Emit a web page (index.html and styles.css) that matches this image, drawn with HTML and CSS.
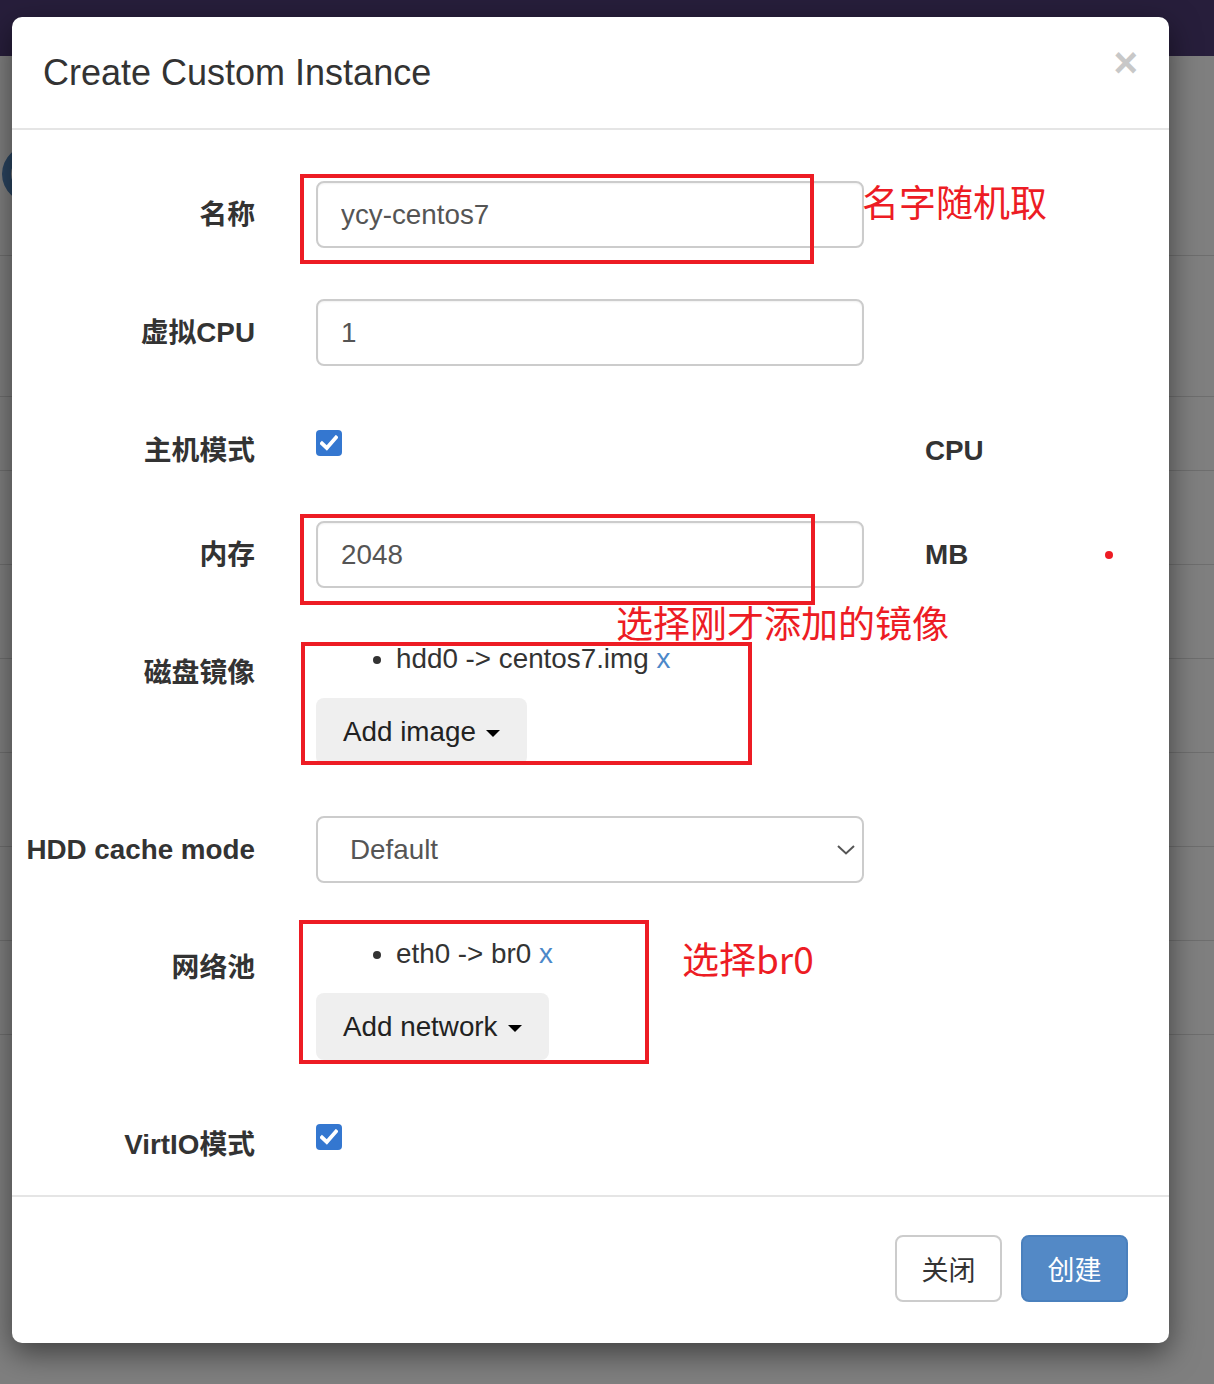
FILE: index.html
```html
<!DOCTYPE html>
<html lang="zh-CN">
<head>
    <meta charset="UTF-8">
    <meta name="viewport" content="width=device-width, initial-scale=1.0">
    <title>Create Custom Instance</title>
    <link rel="stylesheet" href="styles.css">
</head>
<body>
    <!-- page behind the modal -->
    <div class="page">
        <nav class="navbar"></nav>
        <div class="page-content">
            <div class="page-logo"></div>
            <div class="table">
                <div class="table-row table-row-head"></div>
                <div class="table-row table-row-short"></div>
                <div class="table-row"></div>
                <div class="table-row"></div>
                <div class="table-row"></div>
                <div class="table-row"></div>
                <div class="table-row"></div>
                <div class="table-row"></div>
            </div>
        </div>
    </div>

    <div class="modal-backdrop"></div>

    <div class="modal">
        <div class="modal-header">
            <h4 class="modal-title">Create Custom Instance</h4>
            <span class="close">&times;</span>
        </div>

        <div class="modal-body">
            <div class="form-row">
                <label class="control-label">名称</label>
                <input class="form-control" type="text" value="ycy-centos7">
            </div>

            <div class="form-row">
                <label class="control-label">虚拟CPU</label>
                <input class="form-control" type="text" value="1">
            </div>

            <div class="form-row">
                <label class="control-label">主机模式</label>
                <div class="check-cell">
                    <span class="checkbox">
                        <svg width="18" height="16" viewBox="0 0 18 16"><path d="M2 8.5 L6.8 13 L16 2.5" fill="none" stroke="#fff" stroke-width="3.8" stroke-linecap="square"/></svg>
                    </span>
                </div>
                <label class="control-label unit-label">CPU</label>
            </div>

            <div class="form-row">
                <label class="control-label">内存</label>
                <input class="form-control" type="text" value="2048">
                <label class="control-label unit-label">MB</label>
            </div>

            <div class="form-row">
                <label class="control-label">磁盘镜像</label>
                <div class="list-cell">
                    <ul class="item-list">
                        <li>hdd0 -&gt; centos7.img <a href="#" class="remove">x</a></li>
                    </ul>
                    <button class="dropdown-btn">Add image<span class="caret"></span></button>
                </div>
            </div>

            <div class="form-row">
                <label class="control-label">HDD cache mode</label>
                <div class="select-box">
                    <span>Default</span>
                    <svg width="18" height="10" viewBox="0 0 18 10"><path d="M1 1 L9 8.5 L17 1" fill="none" stroke="#555" stroke-width="2"/></svg>
                </div>
            </div>

            <div class="form-row">
                <label class="control-label">网络池</label>
                <div class="list-cell">
                    <ul class="item-list">
                        <li>eth0 -&gt; br0 <a href="#" class="remove">x</a></li>
                    </ul>
                    <button class="dropdown-btn">Add network<span class="caret"></span></button>
                </div>
            </div>

            <div class="form-row">
                <label class="control-label">VirtIO模式</label>
                <div class="check-cell">
                    <span class="checkbox">
                        <svg width="18" height="16" viewBox="0 0 18 16"><path d="M2 8.5 L6.8 13 L16 2.5" fill="none" stroke="#fff" stroke-width="3.8" stroke-linecap="square"/></svg>
                    </span>
                </div>
            </div>
        </div>

        <div class="modal-footer">
            <button class="btn btn-default">关闭</button>
            <button class="btn btn-primary">创建</button>
        </div>
    </div>

    <!-- red notes drawn on top of the screenshot -->
    <div class="note-box note-box-name"></div>
    <div class="note-box note-box-mem"></div>
    <div class="note-box note-box-image"></div>
    <div class="note-box note-box-net"></div>
    <div class="note-text note-text-name">名字随机取</div>
    <div class="note-text note-text-image">选择刚才添加的镜像</div>
    <div class="note-text note-text-net">选择br0</div>
    <div class="note-dot"></div>
</body>
</html>
```

FILE: styles.css
```css
* {
    margin: 0;
    padding: 0;
    box-sizing: border-box;
}

body {
    font-family: "Liberation Sans", Arial, "Noto Sans CJK SC", sans-serif;
    color: #333;
    background: #fff;
    width: 1214px;
    height: 1384px;
    overflow: hidden;
    position: relative;
}

/* background page */
.navbar {
    height: 56px;
    background: #4e3c77;
}

.page-content {
    padding-top: 88px;
}

.page-logo {
    width: 64px;
    height: 60px;
    margin-left: 2px;
    border: 9px solid #5589c0;
    border-radius: 50%;
}

.table {
    margin-top: 51px;
    border-top: 1px solid #dcdcdc;
}

.table-row {
    height: 94px;
    border-bottom: 1px solid #dcdcdc;
}

.table-row-head {
    height: 141px;
}

.table-row-short {
    height: 74px;
}

.modal-backdrop {
    position: absolute;
    inset: 0;
    background: rgba(0, 0, 0, 0.5);
}

/* modal */
.modal {
    position: absolute;
    top: 17px;
    left: 12px;
    width: 1157px;
    background: #fff;
    border-radius: 10px;
    box-shadow: 0 10px 30px rgba(0, 0, 0, 0.5);
}

.modal-header {
    display: flex;
    justify-content: space-between;
    align-items: flex-start;
    padding: 30px 31px 29px;
    border-bottom: 2px solid #e5e5e5;
}

.modal-title {
    font-size: 36px;
    line-height: 52px;
    font-weight: 400;
    color: #333;
}

.close {
    font-size: 42px;
    line-height: 42px;
    font-weight: 700;
    color: #c8c8c8;
    margin-top: -5px;
}

.modal-body {
    padding: 51px 0 31px;
}

.form-row {
    display: grid;
    grid-template-columns: 243px 548px 1fr;
    column-gap: 61px;
    align-items: start;
    margin-bottom: 51px;
}

.form-row:last-child {
    margin-bottom: 0;
}

.control-label {
    text-align: right;
    font-size: 27.8px;
    line-height: 39px;
    padding-top: 13.5px;
    font-weight: 700;
    color: #333;
}

.unit-label {
    text-align: left;
}

.form-control {
    width: 100%;
    height: 67px;
    border: 2px solid #ccc;
    border-radius: 8px;
    padding: 0 23px;
    font-family: inherit;
    font-size: 27.8px;
    color: #555;
    background: #fff;
    outline: none;
    box-shadow: inset 0 1px 2px rgba(0, 0, 0, 0.06);
}

.check-cell {
    height: 53px;
    padding-top: 13px;
}

.checkbox {
    display: flex;
    align-items: center;
    justify-content: center;
    width: 26px;
    height: 26px;
    border-radius: 4px;
    background: #3477d0;
}

.select-box {
    display: flex;
    justify-content: space-between;
    align-items: center;
    height: 67px;
    border: 2px solid #ccc;
    border-radius: 8px;
    padding: 0 7px 0 32px;
    font-size: 27.8px;
    color: #555;
}

.item-list {
    list-style: disc;
    padding-left: 80px;
    margin-bottom: 20px;
    font-size: 27.8px;
    line-height: 39px;
    color: #333;
}

.remove {
    color: #4c88c9;
    text-decoration: none;
}

.dropdown-btn {
    display: inline-flex;
    align-items: center;
    height: 67px;
    padding: 0 27px;
    border: none;
    border-radius: 8px;
    background: #efefef;
    font-family: inherit;
    font-size: 27.8px;
    color: #222;
}

.caret {
    display: inline-block;
    margin-left: 10px;
    margin-top: 3px;
    border-top: 7px solid #000;
    border-left: 7px solid transparent;
    border-right: 7px solid transparent;
}

.modal-footer {
    display: flex;
    justify-content: flex-end;
    gap: 19px;
    padding: 38px 41px 41px;
    border-top: 2px solid #e5e5e5;
}

.btn {
    width: 107px;
    height: 67px;
    border-radius: 8px;
    font-family: "Noto Sans CJK SC", sans-serif;
    font-size: 27px;
}

.btn-default {
    background: #fff;
    border: 2px solid #ccc;
    color: #333;
}

.btn-primary {
    background: #5389c6;
    border: 2px solid #4a80bd;
    color: #fff;
}

/* red annotations */
.note-box {
    position: absolute;
    border: 4px solid #ed1c24;
}

.note-box-name {
    left: 300px;
    top: 174px;
    width: 514px;
    height: 90px;
}

.note-box-mem {
    left: 300px;
    top: 514px;
    width: 515px;
    height: 91px;
}

.note-box-image {
    left: 301px;
    top: 642px;
    width: 451px;
    height: 123px;
}

.note-box-net {
    left: 299px;
    top: 920px;
    width: 350px;
    height: 144px;
}

.note-text {
    position: absolute;
    font-family: "Noto Sans CJK SC", sans-serif;
    font-size: 37px;
    line-height: 32px;
    color: #ed1c24;
    white-space: nowrap;
}

.note-text-name {
    left: 862px;
    top: 185px;
}

.note-text-image {
    left: 616px;
    top: 606px;
}

.note-text-net {
    left: 682px;
    top: 942px;
}

.note-dot {
    position: absolute;
    left: 1105px;
    top: 551px;
    width: 8px;
    height: 8px;
    border-radius: 50%;
    background: #ed1c24;
}
```
